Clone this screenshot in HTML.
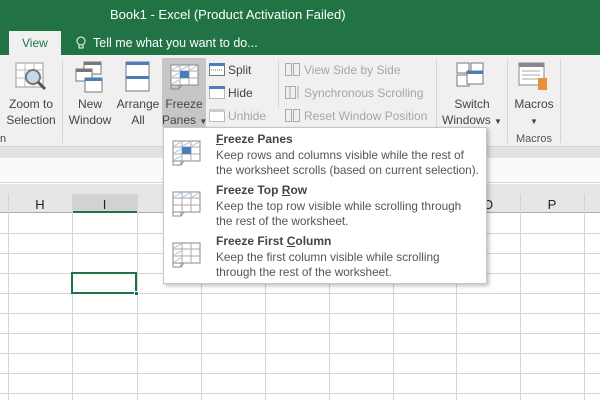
<!DOCTYPE html>
<html><head><style>
*{margin:0;padding:0;box-sizing:border-box}
body{width:600px;height:400px;overflow:hidden;position:relative;background:#fff;font-family:"Liberation Sans",sans-serif;font-size:12px;color:#444}
.a{position:absolute;white-space:nowrap}
.vl{position:absolute;width:1px;background:#d4d4d4;top:194px;height:206px}
.hl{position:absolute;height:1px;background:#d4d4d4;left:0;width:600px}
.rb{color:#444;font-size:12px;text-align:center;line-height:16px}
.dis{color:#a6a6a6}
.mt{font-weight:bold;color:#444;font-size:12px}
.md{color:#555;font-size:11.8px;line-height:15px}
</style></head><body>
<div class="a" style="left:0;top:0;width:600px;height:55px;background:#217346"></div>
<div class="a" style="left:110px;top:7px;color:#fff;font-size:13px">Book1 - Excel (Product Activation Failed)</div>
<div class="a" style="left:9px;top:31px;width:52px;height:24px;background:#f0f0f0"></div>
<div class="a" style="left:22px;top:36px;color:#217346;font-size:12px">View</div>
<svg class="a" style="left:76px;top:36px" width="10" height="14"><circle cx="5" cy="5" r="4" fill="none" stroke="#fff"/><path d="M3 9v3h4V9" fill="none" stroke="#fff"/></svg>
<div class="a" style="left:93px;top:36px;color:#fff;font-size:12.5px">Tell me what you want to do...</div>
<div class="a" style="left:0;top:55px;width:600px;height:92px;background:#f0f0f0;border-bottom:1px solid #d5d5d5"></div>
<div class="a" style="left:62px;top:60px;width:1px;height:83px;background:#d5d5d5"></div>
<div class="a" style="left:278px;top:60px;width:1px;height:48px;background:#d5d5d5"></div>
<div class="a" style="left:436px;top:60px;width:1px;height:83px;background:#d5d5d5"></div>
<div class="a" style="left:507px;top:60px;width:1px;height:83px;background:#d5d5d5"></div>
<div class="a" style="left:560px;top:60px;width:1px;height:83px;background:#d5d5d5"></div>
<svg class="a" style="left:15px;top:62px" width="34" height="32"><rect x="1" y="1" width="27" height="24" fill="#fff" stroke="#999"/><path d="M1 8h27M1 16h27M10 1v24M19 1v24" stroke="#bbb"/><circle cx="18" cy="15" r="7" fill="#c5d9ee" stroke="#777" stroke-width="2"/><path d="M23 20l7 7" stroke="#555" stroke-width="3"/></svg>
<div class="a rb" style="left:3px;top:96px;width:56px">Zoom to<br>Selection</div>
<div class="a rb" style="left:0;top:131px;font-size:11px">n</div>
<svg class="a" style="left:75px;top:61px" width="30" height="33"><rect x="9" y="1" width="17" height="12" fill="#fff" stroke="#777"/><rect x="9" y="1" width="17" height="3" fill="#777"/><rect x="1" y="8" width="16" height="12" fill="#fff" stroke="#777"/><rect x="1" y="8" width="16" height="3" fill="#777"/><rect x="10" y="17" width="17" height="14" fill="#fff" stroke="#777"/><rect x="10" y="17" width="17" height="3" fill="#4a7ebb"/></svg>
<div class="a rb" style="left:64px;top:96px;width:52px">New<br>Window</div>
<svg class="a" style="left:125px;top:61px" width="26" height="32"><rect x="1" y="1" width="23" height="29" fill="#fff" stroke="#777"/><rect x="1" y="1" width="23" height="3" fill="#4a7ebb"/><rect x="1" y="15" width="23" height="3" fill="#4a7ebb"/></svg>
<div class="a rb" style="left:114px;top:96px;width:48px">Arrange<br>All</div>
<div class="a" style="left:162px;top:58px;width:44px;height:69px;background:#c6c6c6"></div>
<svg class="a" style="left:170px;top:64px" width="30" height="27"><rect x="1" y="1" width="27" height="20" fill="#fff" stroke="#888"/><path d="M1 7h27M1 14h27M10 1v20M19 1v20" stroke="#aaa"/><rect x="10" y="7" width="9" height="7" fill="#4a7ebb"/><path d="M2 6l7-4M11 6l7-4M20 6l7-4M2 13l7-4M2 20l7-4" stroke="#9cc0e6"/><path d="M1 21v4h8v-4M9 25l3-4" fill="none" stroke="#888"/></svg>
<div class="a rb" style="left:162px;top:96px;width:44px">Freeze<br>Panes <span style="font-size:8px">▼</span></div>
<svg class="a" style="left:209px;top:63px" width="16" height="14"><rect x=".5" y=".5" width="15" height="12" fill="#fff" stroke="#777"/><rect x="0" y="0" width="16" height="3" fill="#4a7ebb"/><path d="M2 7h12" stroke="#777" stroke-dasharray="1 1"/></svg>
<div class="a" style="left:228px;top:63px;color:#444">Split</div>
<svg class="a" style="left:209px;top:86px" width="16" height="14"><rect x=".5" y=".5" width="15" height="12" fill="#fff" stroke="#777" stroke-dasharray="1 1"/><rect x="0" y="0" width="16" height="3" fill="#4a7ebb"/></svg>
<div class="a" style="left:228px;top:86px;color:#444">Hide</div>
<svg class="a" style="left:209px;top:109px" width="16" height="14"><rect x=".5" y=".5" width="15" height="12" fill="#fff" stroke="#bbb"/><rect x="0" y="0" width="16" height="3" fill="#ccc"/></svg>
<div class="a dis" style="left:228px;top:109px">Unhide</div>
<svg class="a" style="left:285px;top:63px" width="16" height="14"><rect x=".5" y=".5" width="6" height="12" fill="none" stroke="#aaa"/><rect x="8.5" y=".5" width="6" height="12" fill="none" stroke="#aaa"/></svg>
<div class="a dis" style="left:304px;top:63px">View Side by Side</div>
<svg class="a" style="left:285px;top:86px" width="16" height="14"><rect x=".5" y=".5" width="10" height="12" fill="none" stroke="#aaa"/><path d="M13 0v13M5 0v13" stroke="#aaa"/></svg>
<div class="a dis" style="left:304px;top:86px">Synchronous Scrolling</div>
<svg class="a" style="left:285px;top:109px" width="16" height="14"><rect x=".5" y=".5" width="6" height="12" fill="none" stroke="#aaa"/><rect x="8.5" y=".5" width="6" height="12" fill="none" stroke="#aaa"/></svg>
<div class="a dis" style="left:304px;top:109px">Reset Window Position</div>
<svg class="a" style="left:456px;top:62px" width="30" height="26"><rect x="1" y="1" width="12" height="10" fill="#fff" stroke="#777"/><rect x="15" y="1" width="12" height="10" fill="#fff" stroke="#777"/><rect x="1" y="13" width="12" height="11" fill="#fff" stroke="#777"/><rect x="11" y="9" width="16" height="13" fill="#fff" stroke="#777"/><rect x="11" y="9" width="16" height="3" fill="#4a7ebb"/></svg>
<div class="a rb" style="left:440px;top:96px;width:64px">Switch<br>Windows <span style="font-size:8px">▼</span></div>
<svg class="a" style="left:518px;top:62px" width="34" height="30"><rect x="1" y="1" width="25" height="22" fill="#fff" stroke="#888"/><rect x="1" y="1" width="25" height="4" fill="#888"/><path d="M4 9h18M4 13h18M4 17h18" stroke="#aaa"/><path d="M20 16h9v12h-9z" fill="#e8903a"/></svg>
<div class="a rb" style="left:508px;top:96px;width:52px">Macros<br><span style="font-size:8px">▼</span></div>
<div class="a rb" style="left:508px;top:131px;width:52px;font-size:11px;color:#555">Macros</div>
<div class="a" style="left:0;top:147px;width:600px;height:11px;background:#e3e3e3"></div>
<div class="a" style="left:0;top:158px;width:600px;height:25px;background:#fafafa;border-bottom:1px solid #d5d5d5"></div>
<div class="a" style="left:0;top:184px;width:600px;height:10px;background:#e6e6e6"></div>
<div class="a" style="left:0;top:194px;width:600px;height:19px;background:#e6e6e6;border-bottom:1px solid #ababab"></div>
<div class="a" style="left:72px;top:194px;width:65px;height:19px;background:#d2d2d2;border-bottom:2px solid #217346"></div>
<div class="a" style="left:8px;top:197px;width:64px;text-align:center;font-size:13px;color:#222">H</div>
<div class="a" style="left:72px;top:197px;width:65px;text-align:center;font-size:13px;color:#222">I</div>
<div class="a" style="left:456px;top:197px;width:64px;text-align:center;font-size:13px;color:#222">O</div>
<div class="a" style="left:520px;top:197px;width:64px;text-align:center;font-size:13px;color:#222">P</div>
<div class="vl" style="left:8px"></div><div class="vl" style="left:72px"></div><div class="vl" style="left:137px"></div><div class="vl" style="left:201px"></div><div class="vl" style="left:265px"></div><div class="vl" style="left:329px"></div><div class="vl" style="left:393px"></div><div class="vl" style="left:456px"></div><div class="vl" style="left:520px"></div><div class="vl" style="left:584px"></div>
<div class="hl" style="top:233px"></div><div class="hl" style="top:253px"></div><div class="hl" style="top:273px"></div><div class="hl" style="top:293px"></div><div class="hl" style="top:313px"></div><div class="hl" style="top:333px"></div><div class="hl" style="top:353px"></div><div class="hl" style="top:373px"></div><div class="hl" style="top:393px"></div>
<div class="a" style="left:71px;top:272px;width:66px;height:22px;border:2px solid #217346"></div>
<div class="a" style="left:134px;top:291px;width:5px;height:5px;background:#217346;border:1px solid #fff"></div>
<div class="a" style="left:163px;top:127px;width:324px;height:157px;background:#fff;border:1px solid #c6c6c6;box-shadow:2px 2px 4px rgba(0,0,0,.25)"></div>
<svg class="a" style="left:172px;top:140px" width="30" height="26"><rect x="1" y="1" width="27" height="20" fill="#fff" stroke="#888"/><path d="M1 7h27M1 14h27M10 1v20M19 1v20" stroke="#aaa"/><rect x="10" y="7" width="9" height="7" fill="#4a7ebb"/><path d="M2 6l7-4M11 6l7-4M20 6l7-4M2 13l7-4M2 20l7-4" stroke="#9cc0e6"/><path d="M1 21v4h8v-4M9 25l3-4" fill="none" stroke="#888"/></svg>
<svg class="a" style="left:172px;top:191px" width="30" height="26"><rect x="1" y="1" width="27" height="20" fill="#fff" stroke="#888"/><path d="M1 7h27M1 14h27M10 1v20M19 1v20" stroke="#aaa"/><path d="M2 6l7-4M11 6l7-4M20 6l7-4" stroke="#9cc0e6"/><path d="M1 21v4h8v-4M9 25l3-4" fill="none" stroke="#888"/></svg>
<svg class="a" style="left:172px;top:242px" width="30" height="26"><rect x="1" y="1" width="27" height="20" fill="#fff" stroke="#888"/><path d="M1 7h27M1 14h27M10 1v20M19 1v20" stroke="#aaa"/><path d="M2 6l7-4M2 13l7-4M2 20l7-4" stroke="#9cc0e6"/><path d="M1 21v4h8v-4M9 25l3-4" fill="none" stroke="#888"/></svg>
<div class="a mt" style="left:216px;top:132px"><u>F</u>reeze Panes</div>
<div class="a md" style="left:216px;top:148px">Keep rows and columns visible while the rest of<br>the worksheet scrolls (based on current selection).</div>
<div class="a mt" style="left:216px;top:183px">Freeze Top <u>R</u>ow</div>
<div class="a md" style="left:216px;top:199px">Keep the top row visible while scrolling through<br>the rest of the worksheet.</div>
<div class="a mt" style="left:216px;top:234px">Freeze First <u>C</u>olumn</div>
<div class="a md" style="left:216px;top:250px">Keep the first column visible while scrolling<br>through the rest of the worksheet.</div>
</body></html>
